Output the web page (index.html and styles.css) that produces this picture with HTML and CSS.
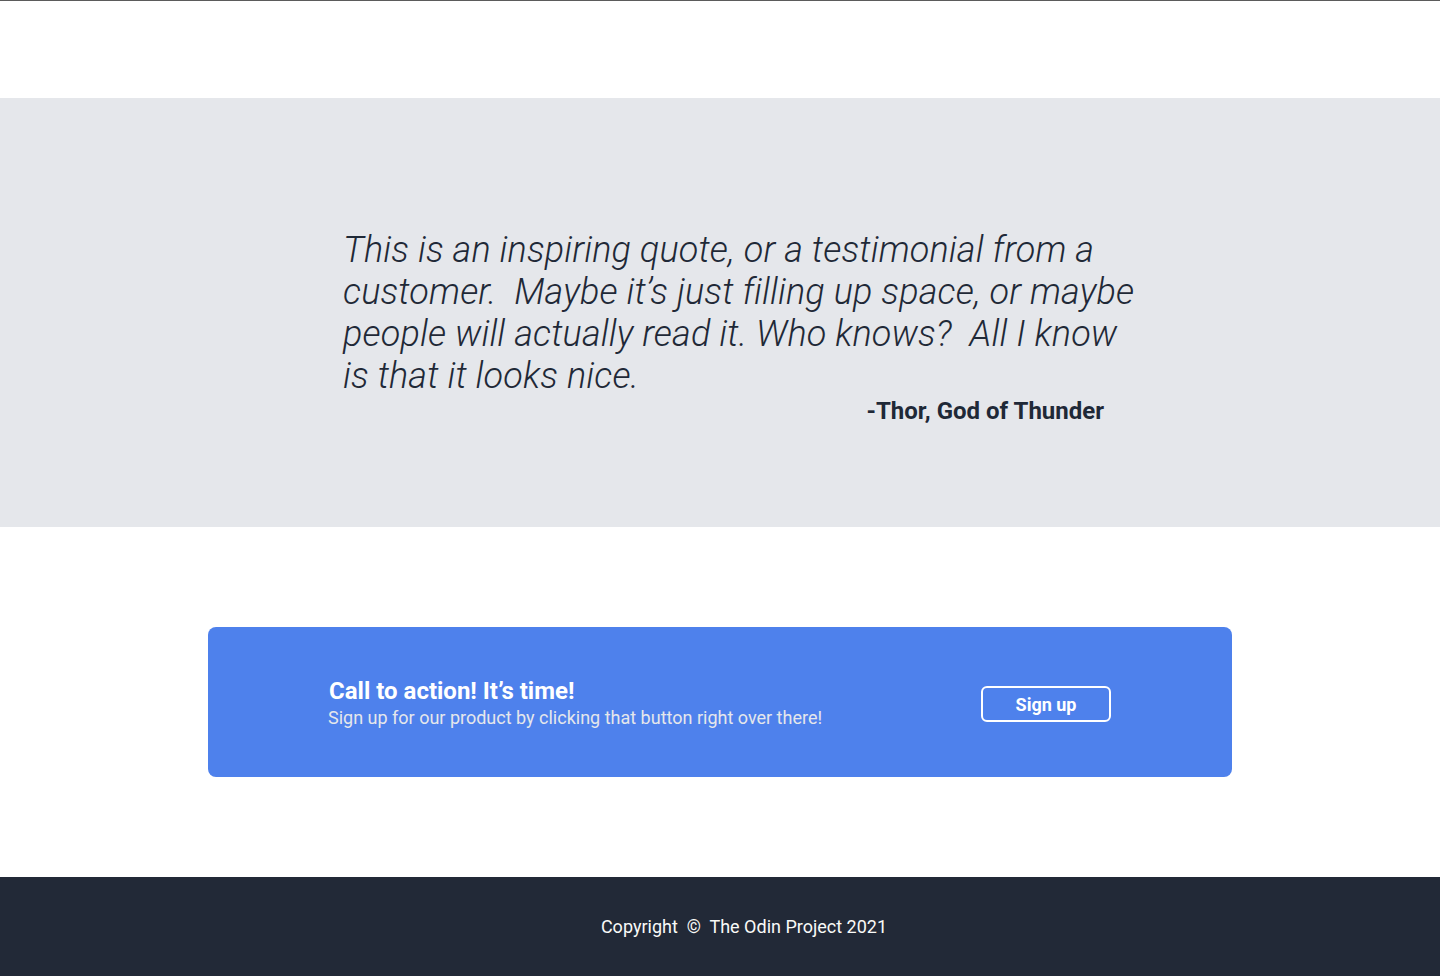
FILE: index.html
```html
<!DOCTYPE html>
<html lang="en">
<head>
<meta charset="utf-8">
<title>Quote</title>
<link rel="stylesheet" href="styles.css">
</head>
<body>
<div class="top-spacer"></div>
<section class="quote-section">
  <div class="quote-wrap">
    <p class="quote">This is an inspiring quote, or a testimonial from a customer.&nbsp; Maybe it’s just filling up space, or maybe people will actually read it. Who knows?&nbsp; All I know is that it looks nice.</p>
    <p class="author">-Thor, God of Thunder</p>
  </div>
</section>
<section class="cta-section">
  <div class="cta">
    <div class="cta-text">
      <h2 class="cta-title">Call to action! It’s time!</h2>
      <p class="cta-sub">Sign up for our product by clicking that button right over there!</p>
    </div>
    <button class="cta-btn">Sign up</button>
  </div>
</section>
<footer class="footer">
  <p class="footer-text">Copyright&nbsp; ©&nbsp; The Odin Project 2021</p>
</footer>
</body>
</html>
```

FILE: styles.css
```css
* { box-sizing: border-box; }
html, body { margin: 0; padding: 0; }
body {
  font-family: Roboto, "Liberation Sans", sans-serif;
  background: #ffffff;
  color: #1f2937;
}
.top-spacer {
  height: 98px;
  border-top: 1px solid #5b5b5b;
}
.quote-section {
  background: #e5e7eb;
  height: 429px;
  padding-top: 131px;
  padding-left: 343px;
}
.quote-wrap {
  width: 805px;
}
.quote {
  margin: 0;
  font-size: 36px;
  font-weight: 300;
  font-style: italic;
  line-height: 42px;
  letter-spacing: 0.14px;
  color: #1f2937;
}
.author {
  margin: 0;
  text-align: right;
  padding-right: 44px;
  font-size: 24px;
  font-weight: 700;
  line-height: 28px;
  color: #1f2937;
}
.cta-section {
  height: 350px;
  display: flex;
  align-items: center;
  justify-content: center;
}
.cta {
  width: 1024px;
  height: 150px;
  background: #4e81ec;
  border-radius: 8px;
  padding: 0 121px;
  display: flex;
  align-items: center;
  justify-content: space-between;
}
.cta-text {
  padding-top: 3px;
}
.cta-title {
  margin: 0;
  color: #ffffff;
  font-size: 24px;
  font-weight: 700;
  line-height: 28px;
}
.cta-sub {
  margin: 1px 0 0 -1px;
  color: #e5e7eb;
  font-size: 18px;
  font-weight: 400;
  line-height: 24px;
}
.cta-btn {
  width: 130px;
  height: 36px;
  margin-top: 4px;
  background: transparent;
  border: 2px solid #ffffff;
  border-radius: 6px;
  color: #ffffff;
  font-family: Roboto, "Liberation Sans", sans-serif;
  font-size: 18px;
  font-weight: 700;
  padding: 0;
}
.footer {
  background: #222937;
  height: 99px;
  display: flex;
  align-items: center;
  justify-content: center;
  padding-left: 48px;
}
.footer-text {
  margin: 0;
  color: #f9faf8;
  font-size: 18px;
  line-height: 22px;
}
```
